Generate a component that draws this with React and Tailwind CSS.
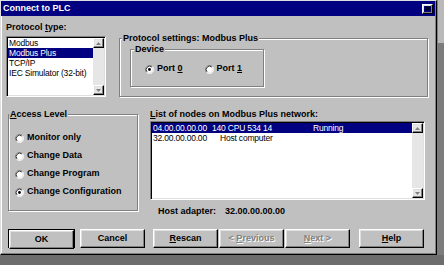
import React from 'react';

const raised = "border border-t-white border-l-white border-r-black border-b-black shadow-[inset_-1px_-1px_0_#808080,inset_1px_1px_0_#dfdfdf]";
const sunken = "border border-t-[#808080] border-l-[#808080] border-r-white border-b-white shadow-[inset_1px_1px_0_#000,inset_-1px_-1px_0_#dfdfdf]";
const etched = "border border-[#808080] shadow-[1px_1px_0_#fff,inset_1px_1px_0_#fff]";

const Radio = ({ checked }) => (
    <svg width="9" height="9" viewBox="0 0 12 12" className="shrink-0">
        <circle cx="6" cy="6" r="5" fill="#fff" />
        <path d="M9.89 2.11A5.5 5.5 0 0 0 2.11 9.89" stroke="#808080" fill="none" />
        <path d="M9.89 2.11A5.5 5.5 0 0 1 2.11 9.89" stroke="#fff" fill="none" />
        <path d="M9.18 2.82A4.5 4.5 0 0 0 2.82 9.18" stroke="#000" fill="none" />
        <path d="M9.18 2.82A4.5 4.5 0 0 1 2.82 9.18" stroke="#dfdfdf" fill="none" />
        {checked && <circle cx="6" cy="6" r="1.9" fill="#000" />}
    </svg>
);

const ArrowBtn = ({ up }) => (
    <div className={`w-[11px] h-[10px] flex items-center justify-center ${raised}`}>
        <svg width="5" height="3" viewBox="0 0 5 3">
            <path d={up ? "M2.5 0L5 3H0Z" : "M0 0H5L2.5 3Z"} fill="#808080" />
        </svg>
    </div>
);

const ScrollBar = () => (
    <div className="w-[11px] flex flex-col justify-between bg-[#e6e6e6]">
        <ArrowBtn up />
        <ArrowBtn />
    </div>
);

const GroupLabel = ({ children, className = "" }) => (
    <span className={`absolute -top-[6px] bg-[#c0c0c0] px-[1px] text-[9px] leading-[10px] font-bold text-black ${className}`}>
        {children}
    </span>
);

const Button = ({ children, disabled, className = "" }) => (
    <div className={`h-[19px] flex items-center justify-center text-[9px] font-bold ${raised} ${disabled ? 'text-[#808080] [text-shadow:1px_1px_0_#fff]' : 'text-black'} ${className}`}>
        {children}
    </div>
);

const protocols = ['Modbus', 'Modbus Plus', 'TCP/IP', 'IEC Simulator (32-bit)'];
const access = [
    { label: 'Monitor only' },
    { label: 'Change Data' },
    { label: 'Change Program' },
    { label: 'Change Configuration', checked: true },
];

export default function App() {
    return (
        <div className="w-[444px] h-[265px] bg-[#6d6d6d] overflow-hidden font-['Liberation_Sans',Arial,sans-serif] text-black">
            <div className="flex">
                <div className="w-[437px] h-[255px] flex flex-col bg-[#c0c0c0] border border-t-[#dfdfdf] border-l-[#dfdfdf] border-r-black border-b-black shadow-[inset_-1px_-1px_0_#808080,inset_1px_1px_0_#fff]">
                    {/* title bar */}
                    <div className="h-[15px] mr-[1px] bg-[#000080] flex items-center justify-between pl-[2px] pr-[2px]">
                        <span className="text-white text-[9px] font-bold leading-none">Connect to PLC</span>
                        <div className={`w-[11px] h-[10px] flex items-center justify-center ${raised}`}>
                            <svg width="6" height="5" viewBox="0 0 6 5">
                                <path d="M0.5 0.5L5.5 4.5M5.5 0.5L0.5 4.5" stroke="#000" strokeWidth="1.4" />
                            </svg>
                        </div>
                    </div>

                    {/* row 1 */}
                    <div className="h-[84px] flex items-start">
                        <div className="ml-[5px] pt-[5px] w-[100px]">
                            <div className="text-[9px] leading-[12px] font-bold">
                                Protocol <span className="underline">t</span>ype:
                            </div>
                            <div className={`mt-[3px] h-[61px] p-[1px] bg-white flex ${sunken}`}>
                                <div className="flex-1 flex flex-col">
                                    {protocols.map((p, i) => (
                                        <div key={p} className={`h-[10px] leading-[10px] text-[8.5px] tracking-[-0.2px] pl-[1px] whitespace-nowrap ${i === 1 ? 'bg-[#000080] text-white' : ''}`}>
                                            {p}
                                        </div>
                                    ))}
                                </div>
                                <ScrollBar />
                            </div>
                        </div>

                        <div className={`relative ml-[13px] mt-[22px] w-[309px] h-[59px] ${etched}`}>
                            <GroupLabel className="left-[2px]">Protocol settings: Modbus Plus</GroupLabel>
                            <div className={`relative ml-[10px] mt-[10px] w-[134px] h-[38px] ${etched}`}>
                                <GroupLabel className="left-[3px]">Device</GroupLabel>
                                <div className="h-full flex items-center pl-[14px] pt-[2px] text-[9px] font-bold">
                                    <div className="flex items-center gap-[3px]">
                                        <Radio checked />
                                        <span>Port <span className="underline">0</span></span>
                                    </div>
                                    <div className="flex items-center gap-[3px] ml-[22px]">
                                        <Radio />
                                        <span>Port <span className="underline">1</span></span>
                                    </div>
                                </div>
                            </div>
                        </div>
                    </div>

                    {/* row 2 */}
                    <div className="h-[112px] flex items-start">
                        <div className={`relative ml-[7px] mt-[14px] w-[130px] h-[97px] ${etched}`}>
                            <GroupLabel className="left-0"><span className="underline">A</span>ccess Level</GroupLabel>
                            <div className="flex flex-col pt-[14px] pl-[6px]">
                                {access.map(a => (
                                    <div key={a.label} className="h-[18px] flex items-center gap-[3px] text-[9px] font-bold">
                                        <Radio checked={a.checked} />
                                        <span>{a.label}</span>
                                    </div>
                                ))}
                            </div>
                        </div>

                        <div className="ml-[12px] pt-[8px] w-[275px]">
                            <div className="text-[9px] leading-[12px] font-bold">
                                <span className="underline">L</span>ist of nodes on Modbus Plus network:
                            </div>
                            <div className={`mt-[1px] h-[79px] p-[1px] bg-white flex ${sunken}`}>
                                <div className="flex-1 flex flex-col text-[8.5px] tracking-[-0.2px] leading-[10px]">
                                    <div className="h-[10px] flex bg-[#000080] text-white pl-[1px] whitespace-nowrap">
                                        <span className="w-[59px]">04.00.00.00.00</span>
                                        <span className="w-[101px]">140 CPU 534 14</span>
                                        <span>Running</span>
                                    </div>
                                    <div className="h-[10px] flex pl-[1px] whitespace-nowrap">
                                        <span className="w-[67px]">32.00.00.00.00</span>
                                        <span>Host computer</span>
                                    </div>
                                </div>
                                <ScrollBar />
                            </div>
                            <div className="mt-[5px] ml-[8px] flex text-[9px] leading-[12px] font-bold">
                                <span className="w-[67px]">Host adapter:</span>
                                <span>32.00.00.00.00</span>
                            </div>
                        </div>
                    </div>

                    {/* buttons */}
                    <div className="mt-[17px] ml-[7px] flex">
                        <div className="w-[67px] h-[19px] border border-black">
                            <Button className="h-[17px]">OK</Button>
                        </div>
                        <Button className="w-[65px] ml-[5px]">Cancel</Button>
                        <Button className="w-[65px] ml-[8px]"><span><span className="underline">R</span>escan</span></Button>
                        <Button disabled className="w-[65px] ml-[1px]"><span>&lt; <span className="underline">P</span>revious</span></Button>
                        <Button disabled className="w-[65px] ml-[1px]"><span><span className="underline">N</span>ext &gt;</span></Button>
                        <Button className="w-[65px] ml-[9px]"><span><span className="underline">H</span>elp</span></Button>
                    </div>
                </div>
                <div className="flex-1 flex flex-col h-[255px]">
                    <div className="h-[43px] bg-[#b9b9b9] border-l border-[#808080]" />
                    <div className="flex-1 bg-[#7c7c7c]" />
                </div>
            </div>
        </div>
    );
}
